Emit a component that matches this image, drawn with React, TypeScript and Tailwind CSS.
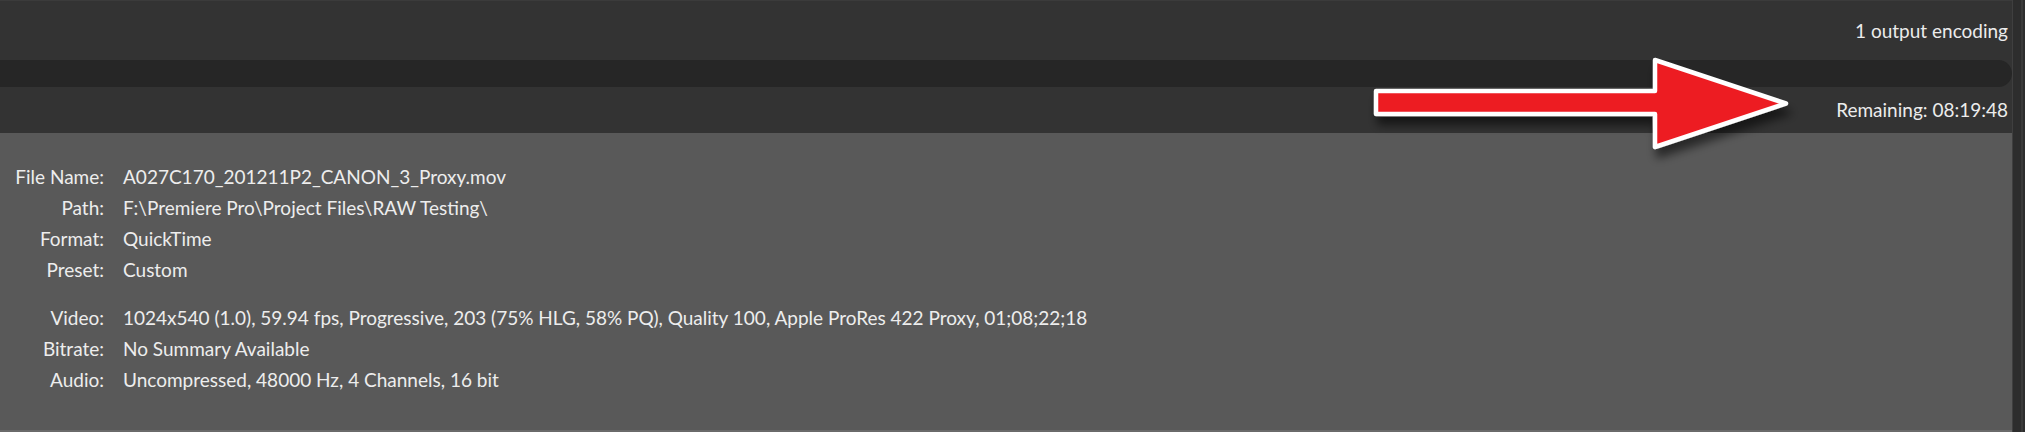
import React from 'react';

interface InfoRow {
  label: string;
  value: string;
  gapBefore?: boolean;
}

const rows: InfoRow[] = [
  { label: 'File Name:', value: 'A027C170_201211P2_CANON_3_Proxy.mov' },
  { label: 'Path:', value: 'F:\\Premiere Pro\\Project Files\\RAW Testing\\' },
  { label: 'Format:', value: 'QuickTime' },
  { label: 'Preset:', value: 'Custom' },
  {
    label: 'Video:',
    value:
      '1024x540 (1.0), 59.94 fps, Progressive, 203 (75% HLG, 58% PQ), Quality 100, Apple ProRes 422 Proxy, 01;08;22;18',
    gapBefore: true
  },
  { label: 'Bitrate:', value: 'No Summary Available' },
  { label: 'Audio:', value: 'Uncompressed, 48000 Hz, 4 Channels, 16 bit' }
];

const font = "font-['Lato','Open_Sans',sans-serif]";

// red callout arrow pasted over the screenshot
const CalloutArrow: React.FC = () => (
  <svg
    className="absolute left-[1360px] top-[40px] pointer-events-none"
    width="460"
    height="140"
    viewBox="0 0 460 140"
  >
    <defs>
      <filter id="arrowShadow" x="-10%" y="-20%" width="130%" height="160%">
        <feDropShadow dx="3" dy="9" stdDeviation="5" floodColor="#000" floodOpacity="0.55" />
      </filter>
    </defs>
    <polygon
      points="16,51 295,51 295,20 426,63.5 295,107 295,74 16,74"
      fill="#ed1c24"
      stroke="#ffffff"
      strokeWidth="4.5"
      strokeLinejoin="round"
      filter="url(#arrowShadow)"
    />
  </svg>
);

export default function App() {
  return (
    <div className={`relative flex w-[2025px] h-[432px] overflow-hidden bg-[#333333] ${font}`}>
      <div className="flex-1 flex flex-col border-t border-[#3b3b3b]">
        <div className="h-[59px] flex items-center justify-end pr-[4px] pt-[2px] text-[19px] text-[#ececec]">
          1 output encoding
        </div>
        <div className="h-[27px] rounded-r-full bg-[#262626]" />
        <div className="h-[46px] flex items-center justify-end pr-[4px] text-[19px] text-[#ececec]">
          Remaining: 08:19:48
        </div>
        <div className="flex-1 bg-[#595959] border-b-2 border-[#6a6a6a] pt-[28px]">
          <div className="grid grid-cols-[104px_1fr] gap-x-[19px] text-[19px] leading-[31px] text-[#ededed]">
            {rows.map((row) => (
              <React.Fragment key={row.label}>
                <div className={`text-right whitespace-nowrap ${row.gapBefore ? 'mt-[17px]' : ''}`}>
                  {row.label}
                </div>
                <div className={`whitespace-nowrap ${row.gapBefore ? 'mt-[17px]' : ''}`}>
                  {row.value}
                </div>
              </React.Fragment>
            ))}
          </div>
        </div>
      </div>
      <div className="w-[13px] flex bg-[#2d2d2d] border-l border-[#3f3f3f]">
        <div className="ml-[8px] w-[2px] bg-[#3a3a3a]" />
      </div>
      <CalloutArrow />
    </div>
  );
}
